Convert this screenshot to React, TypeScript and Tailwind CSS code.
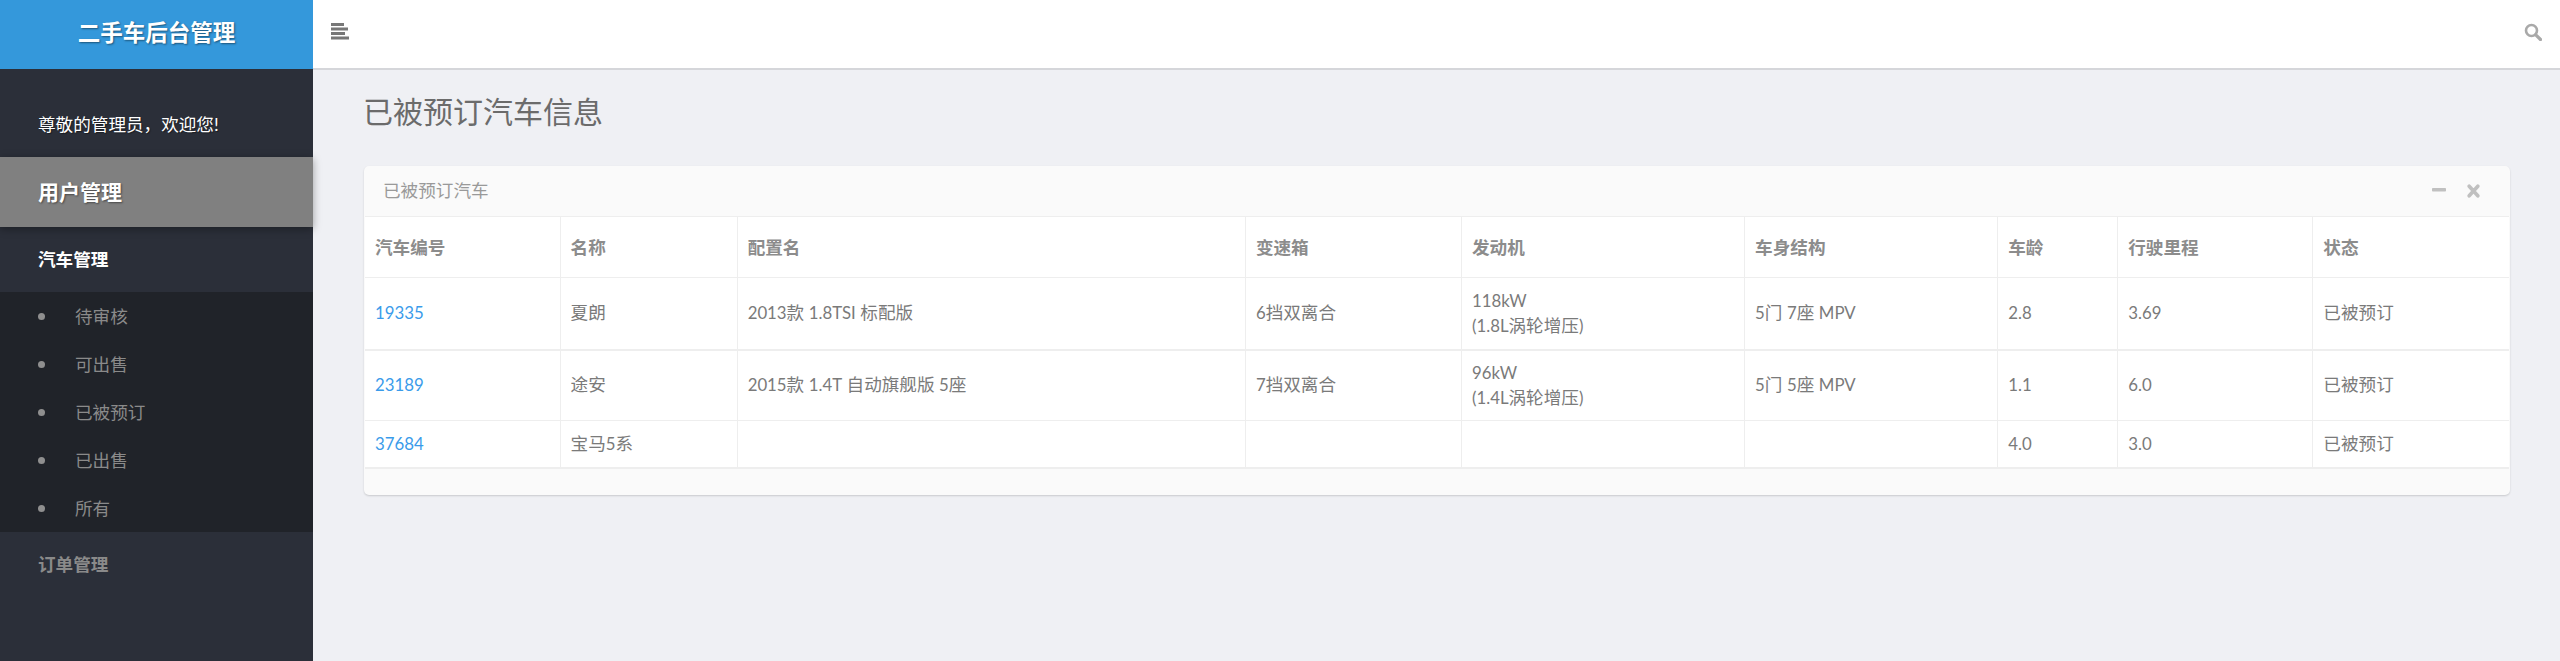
import React from 'react';

type Car = {
  id: string;
  name: string;
  config: string;
  gearbox: string;
  engine: string[];
  body: string;
  age: string;
  mileage: string;
  status: string;
  rowClass: string;
};

const cars: Car[] = [
  { id: '19335', name: '夏朗', config: '2013款 1.8TSI 标配版', gearbox: '6挡双离合', engine: ['118kW', '(1.8L涡轮增压)'], body: '5门 7座 MPV', age: '2.8', mileage: '3.69', status: '已被预订', rowClass: 'h-[72px] border-b-2' },
  { id: '23189', name: '途安', config: '2015款 1.4T 自动旗舰版 5座', gearbox: '7挡双离合', engine: ['96kW', '(1.4L涡轮增压)'], body: '5门 5座 MPV', age: '1.1', mileage: '6.0', status: '已被预订', rowClass: 'h-[71px] border-b' },
  { id: '37684', name: '宝马5系', config: '', gearbox: '', engine: [], body: '', age: '4.0', mileage: '3.0', status: '已被预订', rowClass: 'h-[47px] border-b-2' },
];

const headers = [
  { label: '汽车编号', width: 'w-[195px]' },
  { label: '名称', width: 'w-[177px]' },
  { label: '配置名', width: 'w-[508px]' },
  { label: '变速箱', width: 'w-[216px]' },
  { label: '发动机', width: 'w-[283px]' },
  { label: '车身结构', width: 'w-[253px]' },
  { label: '车龄', width: 'w-[120px]' },
  { label: '行驶里程', width: 'w-[195px]' },
  { label: '状态', width: 'w-[196px]' },
];

const subItems = ['待审核', '可出售', '已被预订', '已出售', '所有'];

// latin runs sit a little smaller than the chinese around them
function Mixed({ text }: { text: string }) {
  return (
    <>
      {text.split(/([\x21-\x7e]+)/).map((part, i) =>
        i % 2 === 1 ? (
          <span key={i} className="text-[16.8px]">{part}</span>
        ) : (
          part
        ),
      )}
    </>
  );
}

function Sidebar() {
  return (
    <aside className="w-[313px] shrink-0 bg-[#2b2f39]">
      <div className="flex h-[69px] items-center justify-center bg-[#3498db] pb-[3px] text-[22.5px] font-bold text-white [text-shadow:1px_1px_2px_rgba(0,0,0,0.45)]">
        二手车后台管理
      </div>
      <div className="flex h-[88px] items-center pl-[38px] pt-[24px] text-[17.6px] text-white [text-shadow:1px_1px_1px_rgba(0,0,0,0.4)]">
        尊敬的管理员，欢迎您!
      </div>
      <div className="flex h-[70px] items-center bg-[#808080] pl-[38px] text-[21px] font-bold text-white shadow-[0_2px_8px_rgba(0,0,0,0.35)] [text-shadow:1px_1px_2px_rgba(0,0,0,0.45)]">
        用户管理
      </div>
      <div className="flex h-[65px] items-center pl-[38px] pt-[2px] text-[17.6px] font-bold text-white">汽车管理</div>
      <ul className="bg-[#202329]">
        {subItems.map((item) => (
          <li key={item} className="flex h-[48px] items-center pl-[38px] pt-[2px] text-[17.6px] text-[#8a8a8a]">
            <span className="mb-[2px] mr-[30px] h-[7px] w-[7px] rounded-full bg-[#8f8f8f]" />
            {item}
          </li>
        ))}
      </ul>
      <div className="flex h-[65px] items-center pl-[38px] pt-[2px] text-[17.6px] font-bold text-[#8a8a8a]">订单管理</div>
    </aside>
  );
}

function TopBar() {
  return (
    <header className="flex h-[70px] items-start justify-between border-b-2 border-[#d5d6da] bg-white pl-[18px] pr-[18px] pt-[23px]">
      <svg width="18" height="17" viewBox="0 0 18 17" fill="#777777">
        <rect x="0" y="0" width="13" height="3" />
        <rect x="0" y="4.5" width="17" height="3" />
        <rect x="0" y="9" width="14" height="3" />
        <rect x="0" y="13.5" width="18" height="3" />
      </svg>
      <svg width="18" height="18" viewBox="0 0 18 18" fill="none" stroke="#a9a9a9">
        <circle cx="7.5" cy="7.5" r="5.5" strokeWidth="2.6" />
        <path d="M11.8 11.8 L16.5 16.5" strokeWidth="3.2" strokeLinecap="round" />
      </svg>
    </header>
  );
}

function CarTable() {
  return (
    <section className="ml-[51px] mt-[32px] w-[2146px] rounded-[5px] bg-[#fafafa] shadow-[0_1px_2px_rgba(0,0,0,0.16)]">
      <div className="flex h-[50px] items-center justify-between pl-[19px] pr-[30px] text-[17.6px] text-[#999999]">
        <span>已被预订汽车</span>
        <div className="flex items-center gap-[21px]">
          <svg width="14" height="14" viewBox="0 0 14 14" fill="#c0c0c0">
            <rect x="0" y="4" width="14" height="3.6" rx="0.8" />
          </svg>
          <svg width="13" height="14" viewBox="0 0 13 14" fill="none" stroke="#c0c0c0" strokeWidth="3.6" strokeLinecap="round">
            <path d="M2.2 2.2 L10.8 11.8 M10.8 2.2 L2.2 11.8" />
          </svg>
        </div>
      </div>
      <table className="ml-px w-[2144px] table-fixed border-collapse bg-white text-left text-[17.6px] text-[#7a7a7a]">
        <thead>
          <tr className="h-[61px] border-y border-[#eeeeee]">
            {headers.map((h) => (
              <th key={h.label} className={`${h.width} border-l border-[#eeeeee] px-[10px] pt-[2px] font-bold text-[#8c8c8c] first:border-l-0`}>
                {h.label}
              </th>
            ))}
          </tr>
        </thead>
        <tbody>
          {cars.map((car) => (
            <tr key={car.id} className={`${car.rowClass} border-[#eeeeee]`}>
              <td className="px-[10px]"><a className="text-[#3a9bea]"><Mixed text={car.id} /></a></td>
              <td className="border-l border-[#eeeeee] px-[10px]"><Mixed text={car.name} /></td>
              <td className="border-l border-[#eeeeee] px-[10px]"><Mixed text={car.config} /></td>
              <td className="border-l border-[#eeeeee] px-[10px]"><Mixed text={car.gearbox} /></td>
              <td className="border-l border-[#eeeeee] px-[10px] leading-[25px]">
                {car.engine.map((line) => (
                  <div key={line}><Mixed text={line} /></div>
                ))}
              </td>
              <td className="border-l border-[#eeeeee] px-[10px]"><Mixed text={car.body} /></td>
              <td className="border-l border-[#eeeeee] px-[10px]"><Mixed text={car.age} /></td>
              <td className="border-l border-[#eeeeee] px-[10px]"><Mixed text={car.mileage} /></td>
              <td className="border-l border-[#eeeeee] px-[10px]">{car.status}</td>
            </tr>
          ))}
        </tbody>
      </table>
      <div className="h-[26px]" />
    </section>
  );
}

export default function App() {
  return (
    <div className="flex h-[661px] overflow-hidden bg-[#eff0f4] font-['Lato','Noto_Sans_CJK_SC',sans-serif]">
      <Sidebar />
      <main className="min-w-0 flex-1">
        <TopBar />
        <h1 className="ml-[50px] mt-[18px] h-[46px] text-[30px] font-normal leading-[46px] text-[#6b6b6b]">已被预订汽车信息</h1>
        <CarTable />
      </main>
    </div>
  );
}
